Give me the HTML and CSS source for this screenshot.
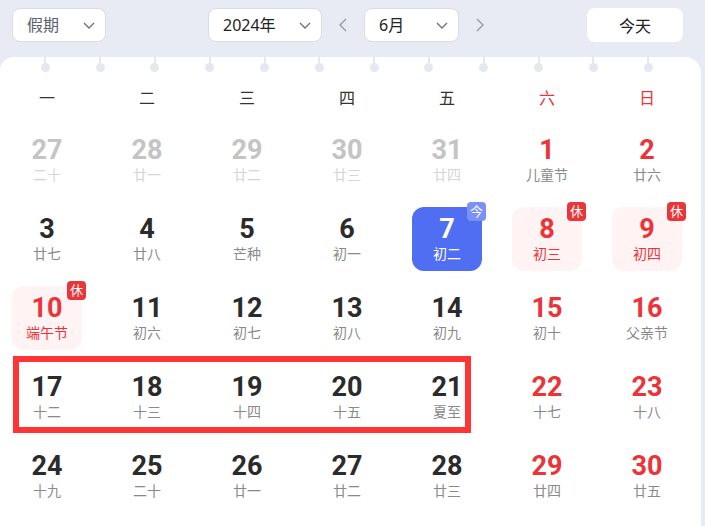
FILE: index.html
```html
<!DOCTYPE html>
<html lang="zh">
<head>
<meta charset="utf-8">
<link rel="stylesheet" href="styles.css">
</head>
<body>
<div class="toolbar">
  <div class="select sel-holiday"><span>假期</span><svg class="chev" viewBox="0 0 12 7" width="12" height="7"><path d="M1 1l5 5 5-5" fill="none" stroke="#6e7382" stroke-width="1.4"/></svg></div>
  <div class="select sel-year"><span>2024年</span><svg class="chev" viewBox="0 0 12 7" width="12" height="7"><path d="M1 1l5 5 5-5" fill="none" stroke="#6e7382" stroke-width="1.4"/></svg></div>
  <div class="arrow"><svg viewBox="0 0 8 14" width="8" height="14"><path d="M7 1L1 7l6 6" fill="none" stroke="#9a9ea8" stroke-width="1.5"/></svg></div>
  <div class="select sel-month"><span>6月</span><svg class="chev" viewBox="0 0 12 7" width="12" height="7"><path d="M1 1l5 5 5-5" fill="none" stroke="#6e7382" stroke-width="1.4"/></svg></div>
  <div class="arrow"><svg viewBox="0 0 8 14" width="8" height="14"><path d="M1 1l6 6-6 6" fill="none" stroke="#9a9ea8" stroke-width="1.5"/></svg></div>
  <div class="today-btn">今天</div>
</div>
<div class="card">
  <div class="rings">
    <i class="ring"></i><i class="ring"></i><i class="ring"></i><i class="ring"></i><i class="ring"></i><i class="ring"></i><i class="ring"></i><i class="ring"></i><i class="ring"></i><i class="ring"></i><i class="ring"></i><i class="ring"></i>
  </div>
  <div class="weekdays">
    <div>一</div><div>二</div><div>三</div><div>四</div><div>五</div><div class="red">六</div><div class="red">日</div>
  </div>
  <div class="grid">
    <div class="cell faded"><b>27</b><small>二十</small></div>
    <div class="cell faded"><b>28</b><small>廿一</small></div>
    <div class="cell faded"><b>29</b><small>廿二</small></div>
    <div class="cell faded"><b>30</b><small>廿三</small></div>
    <div class="cell faded"><b>31</b><small>廿四</small></div>
    <div class="cell weekend"><b>1</b><small>儿童节</small></div>
    <div class="cell weekend"><b>2</b><small>廿六</small></div>

    <div class="cell"><b>3</b><small>廿七</small></div>
    <div class="cell"><b>4</b><small>廿八</small></div>
    <div class="cell"><b>5</b><small>芒种</small></div>
    <div class="cell"><b>6</b><small>初一</small></div>
    <div class="cell today"><b>7</b><small>初二</small><span class="badge badge-today">今</span></div>
    <div class="cell rest"><b>8</b><small>初三</small><span class="badge badge-rest">休</span></div>
    <div class="cell rest"><b>9</b><small>初四</small><span class="badge badge-rest">休</span></div>

    <div class="cell rest"><b>10</b><small>端午节</small><span class="badge badge-rest">休</span></div>
    <div class="cell"><b>11</b><small>初六</small></div>
    <div class="cell"><b>12</b><small>初七</small></div>
    <div class="cell"><b>13</b><small>初八</small></div>
    <div class="cell"><b>14</b><small>初九</small></div>
    <div class="cell weekend"><b>15</b><small>初十</small></div>
    <div class="cell weekend"><b>16</b><small>父亲节</small></div>

    <div class="cell"><b>17</b><small>十二</small></div>
    <div class="cell"><b>18</b><small>十三</small></div>
    <div class="cell"><b>19</b><small>十四</small></div>
    <div class="cell"><b>20</b><small>十五</small></div>
    <div class="cell"><b>21</b><small>夏至</small></div>
    <div class="cell weekend"><b>22</b><small>十七</small></div>
    <div class="cell weekend"><b>23</b><small>十八</small></div>

    <div class="cell"><b>24</b><small>十九</small></div>
    <div class="cell"><b>25</b><small>二十</small></div>
    <div class="cell"><b>26</b><small>廿一</small></div>
    <div class="cell"><b>27</b><small>廿二</small></div>
    <div class="cell"><b>28</b><small>廿三</small></div>
    <div class="cell weekend"><b>29</b><small>廿四</small></div>
    <div class="cell weekend"><b>30</b><small>廿五</small></div>
  </div>
  <div class="selection"></div>
</div>
</body>
</html>
```

FILE: styles.css
```css
* { box-sizing: border-box; }
html, body { margin: 0; padding: 0; }
body {
  background: #e8ebf3;
  font-family: "Noto Sans", "Noto Sans CJK SC", sans-serif;
  color: #333;
  width: 705px;
  height: 526px;
  overflow: hidden;
}
.toolbar {
  height: 57px;
  display: flex;
  align-items: flex-start;
  padding: 8px 0 0 12px;
}
.select {
  height: 34px;
  background: #fff;
  border: 1px solid #d9dce4;
  border-radius: 8px;
  display: flex;
  align-items: center;
  justify-content: space-between;
  padding: 0 10px 0 14px;
  font-size: 16px;
  color: #222;
}
.select span { line-height: 20px; }
.sel-holiday { width: 94px; color: #5b606c; }
.sel-year { width: 114px; margin-left: 102px; }
.sel-month { width: 95px; }
.chev { display: block; }
.arrow {
  width: 42px;
  height: 34px;
  display: flex;
  align-items: center;
  justify-content: center;
}
.today-btn {
  margin-left: 86px;
  width: 96px;
  height: 34px;
  background: #fff;
  border-radius: 8px;
  display: flex;
  align-items: center;
  justify-content: center;
  font-size: 16px;
  color: #222;
}
.card {
  position: relative;
  width: 701px;
  height: 469px;
  background: #fff;
  border-radius: 14px 16px 0 0;
}
.rings {
  display: flex;
  padding-left: 18px;
  height: 15px;
}
.ring {
  width: 54.8px;
  height: 15px;
  position: relative;
  display: block;
}
.ring::before {
  content: "";
  display: block;
  width: 2px;
  height: 7px;
  background: #e6e8ef;
  margin: 0 auto;
}
.ring::after {
  content: "";
  display: block;
  width: 9px;
  height: 9px;
  border-radius: 50%;
  background: #e6e8ef;
  margin: -1px auto 0;
}
.weekdays {
  display: grid;
  grid-template-columns: repeat(7, 70px);
  column-gap: 30px;
  padding-left: 12px;
  margin-top: 6px;
  height: 40px;
  line-height: 40px;
  text-align: center;
  font-size: 16px;
  color: #333;
}
.weekdays .red { color: #ec3338; }
.grid {
  display: grid;
  grid-template-columns: repeat(7, 70px);
  grid-auto-rows: 64px;
  column-gap: 30px;
  row-gap: 15px;
  padding-left: 12px;
  margin-top: 10px;
}
.cell {
  position: relative;
  display: flex;
  flex-direction: column;
  align-items: center;
  padding-top: 8px;
  border-radius: 12px;
}
.cell b {
  font-family: Roboto, "Noto Sans", sans-serif;
  font-weight: 700;
  font-size: 27px;
  line-height: 28px;
  color: #2b2b2b;
}
.cell small {
  margin-top: 2px;
  font-size: 14px;
  line-height: 18px;
  color: #8a8a8a;
}
.cell.faded b { color: #c4c4c4; }
.cell.faded small { color: #d6d6d6; }
.cell.weekend b { color: #ec3338; }
.cell.today { background: #4f6ef2; }
.cell.today b, .cell.today small { color: #fff; }
.cell.rest { background: #fff3f3; }
.cell.rest b, .cell.rest small { color: #ec3338; }
.badge {
  position: absolute;
  top: -5px;
  right: -4px;
  width: 19px;
  height: 19px;
  border-radius: 4px;
  color: #fff;
  font-size: 13px;
  line-height: 19px;
  text-align: center;
}
.badge-today { background: #7a91f7; }
.badge-rest { background: #e8363a; }
.selection {
  position: absolute;
  left: 13px;
  top: 299px;
  width: 458px;
  height: 77px;
  border: 6px solid #ff3535;
}
```
